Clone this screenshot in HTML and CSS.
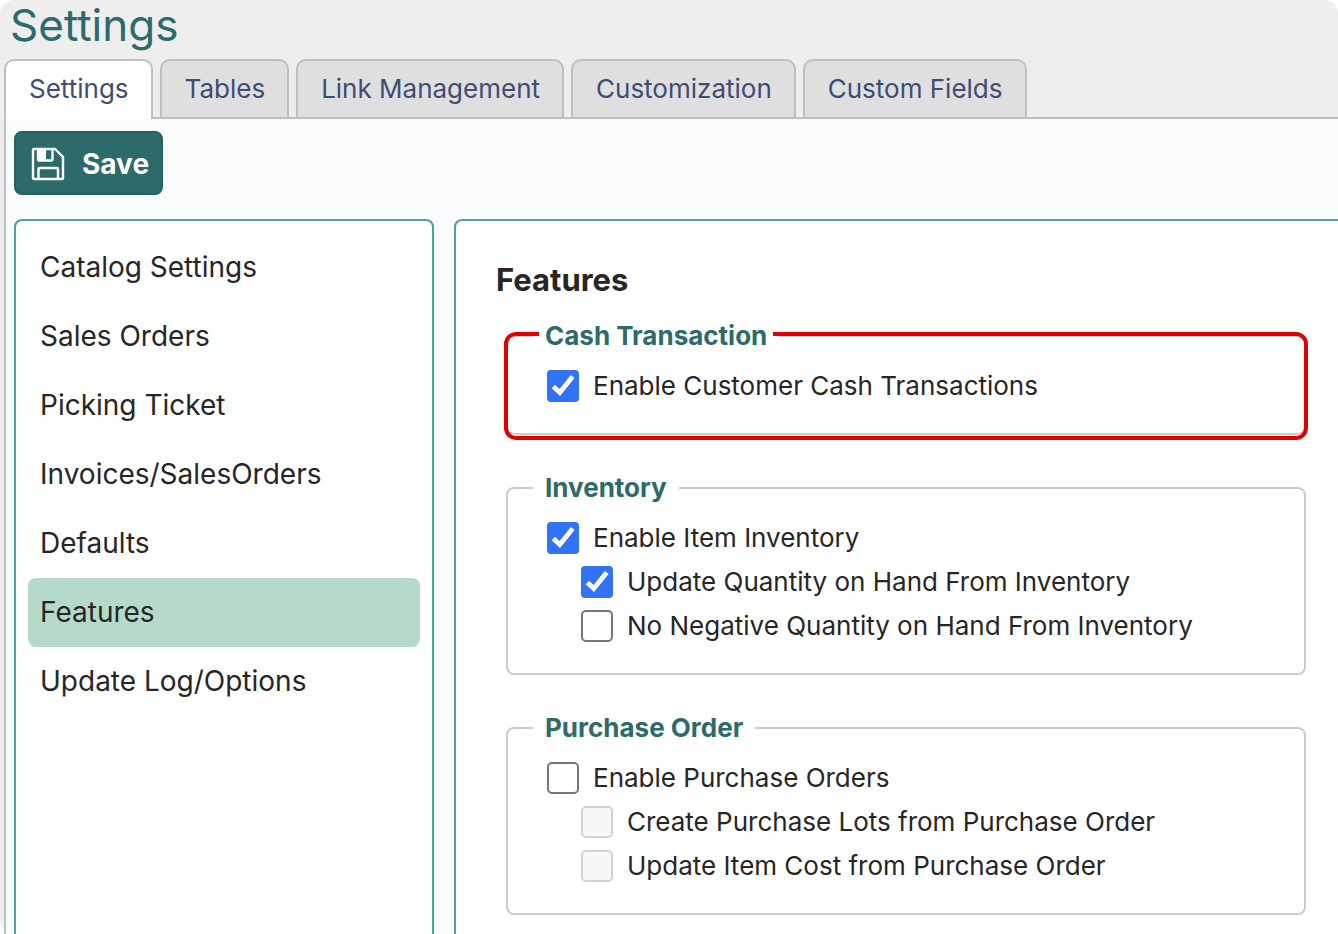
FILE: index.html
```html
<!DOCTYPE html>
<html lang="en">
<head>
<meta charset="utf-8">
<meta name="viewport" content="width=device-width, initial-scale=1">
<title>Settings</title>
<link rel="stylesheet" href="styles.css">
</head>
<body>
<div class="page">
  <h1 class="title">Settings</h1>
  <nav class="tabs">
    <a class="tab active" href="#settings">Settings</a>
    <a class="tab" href="#tables">Tables</a>
    <a class="tab" href="#links">Link Management</a>
    <a class="tab" href="#customization">Customization</a>
    <a class="tab" href="#fields">Custom Fields</a>
  </nav>
  <main class="content">
    <button class="save" type="button">
      <svg class="save-icon" viewBox="0 0 34 34" fill="none" stroke="#fff" stroke-width="2.400" stroke-linejoin="round" aria-hidden="true">
        <path d="M3 2H24L32 10V31a1 1 0 0 1-1 1H3a1 1 0 0 1-1-1V3a1 1 0 0 1 1-1Z"/>
        <path d="M7 2V12.500a1 1 0 0 0 1 1H20.500a1 1 0 0 0 1-1V2"/>
        <path d="M7 2H15V13.500H7Z" fill="#fff" stroke="none"/>
        <path d="M7.500 32V22a1 1 0 0 1 1-1H26a1 1 0 0 1 1 1V32"/>
      </svg>
      Save
    </button>
    <div class="columns">
      <nav class="side">
        <a class="side-link" href="#catalog">Catalog Settings</a>
        <a class="side-link" href="#sales">Sales Orders</a>
        <a class="side-link" href="#picking">Picking Ticket</a>
        <a class="side-link" href="#invoices">Invoices/SalesOrders</a>
        <a class="side-link" href="#defaults">Defaults</a>
        <a class="side-link current" href="#features">Features</a>
        <a class="side-link" href="#log">Update Log/Options</a>
      </nav>
      <section class="panel">
        <h2 class="heading">Features</h2>
        <fieldset class="group highlighted">
          <legend class="legend"><span class="legend-text">Cash Transaction</span></legend>
          <label class="option"><input class="check" type="checkbox" checked>Enable Customer Cash Transactions</label>
        </fieldset>
        <fieldset class="group">
          <legend class="legend">Inventory</legend>
          <label class="option"><input class="check" type="checkbox" checked>Enable Item Inventory</label>
          <label class="option sub"><input class="check" type="checkbox" checked>Update Quantity on Hand From Inventory</label>
          <label class="option sub"><input class="check" type="checkbox">No Negative Quantity on Hand From Inventory</label>
        </fieldset>
        <fieldset class="group">
          <legend class="legend">Purchase Order</legend>
          <label class="option"><input class="check" type="checkbox">Enable Purchase Orders</label>
          <label class="option sub"><input class="check" type="checkbox" disabled>Create Purchase Lots from Purchase Order</label>
          <label class="option sub"><input class="check" type="checkbox" disabled>Update Item Cost from Purchase Order</label>
        </fieldset>
      </section>
    </div>
  </main>
</div>
</body>
</html>
```

FILE: styles.css
```css
* {
  box-sizing: border-box;
}

html {
  background: #fff;
}

body {
  margin: 0;
  font-family: Inter, "Liberation Sans", sans-serif;
  font-size: 26px;
  color: #262626;
}

.page {
  display: flex;
  flex-direction: column;
  min-height: 100vh;
  padding-left: 4px;
  background: #eee;
  border-radius: 14px;
}

.title {
  margin: 0;
  padding: 0 6px 9px;
  font-size: 44px;
  line-height: 50px;
  font-weight: 400;
  color: #2d6a6a;
}

.tabs {
  display: flex;
  gap: 7px;
}

.tab {
  padding: 0 22px 0 23px;
  border: 2px solid #bfbfbf;
  border-bottom: 0;
  border-radius: 10px 10px 0 0;
  background: #dfdfdf;
  line-height: 56px;
  color: #3d4d74;
  text-decoration: none;
  white-space: nowrap;
}

.tab.active {
  z-index: 1;
  margin-bottom: -2px;
  background: #fff;
}

.content {
  flex: 1;
  display: flex;
  flex-direction: column;
  align-items: flex-start;
  gap: 24px;
  padding: 12px 0 0 8px;
  border-top: 2px solid #bfbfbf;
  border-left: 2px solid #bfbfbf;
  background: #fafbfd;
}

.save {
  display: flex;
  align-items: center;
  gap: 17px;
  height: 64px;
  padding: 2px 12px 0 15px;
  border: 2px solid #285f5f;
  border-radius: 8px;
  background: #2d6a6a;
  color: #fff;
  font: 700 28px Inter, "Liberation Sans", sans-serif;
}

.save-icon {
  width: 34px;
  height: 34px;
}

.columns {
  flex: 1;
  align-self: stretch;
  display: flex;
  gap: 20px;
}

.side,
.panel {
  border: 2px solid #4aa3a3;
  border-bottom: 0;
  background: #fff;
}

.side {
  flex: 0 0 420px;
  padding: 12px;
  border-radius: 8px 8px 0 0;
}

.side-link {
  display: block;
  padding: 0 12px;
  border-radius: 8px;
  font-size: 28px;
  line-height: 69px;
  color: #262626;
  text-decoration: none;
}

.side-link.current {
  background: #b5dac9;
}

.panel {
  flex: 1;
  min-width: 0;
  padding: 39px 32px 19px 40px;
  border-right: 0;
  border-radius: 8px 0 0 0;
}

.heading {
  margin: 0 0 20px;
  font-size: 31px;
  line-height: 40px;
  font-weight: 700;
}

.group {
  position: relative;
  min-width: 0;
  margin: 0 0 37px 10px;
  padding: 12px 25px 25px;
  border: 2px solid #ccc;
  border-radius: 8px;
}

.group:last-child {
  margin-bottom: 0;
}

.legend {
  padding: 0 12px;
  line-height: 32px;
  font-weight: 700;
  color: #2d6a6a;
}

.highlighted::after {
  content: "";
  position: absolute;
  inset: -20px -4px -7px;
  border: 4px solid #e00000;
  border-radius: 12px;
  pointer-events: none;
}

.legend-text {
  position: relative;
  z-index: 1;
  margin: 0 -6px;
  padding: 0 6px;
  background: #fff;
}

.option {
  display: flex;
  align-items: center;
  gap: 14px;
  padding-left: 14px;
  line-height: 44px;
}

.option.sub {
  padding-left: 48px;
}

.check {
  flex: none;
  appearance: none;
  width: 32px;
  height: 32px;
  margin: 0;
  border: 2px solid #767676;
  border-radius: 5px;
  background: #fff;
}

.check:checked {
  border-color: #3273f6;
  border-radius: 4px;
  background: #3273f6 url("data:image/svg+xml,%3Csvg xmlns='http://www.w3.org/2000/svg' viewBox='0 0 32 32'%3E%3Cpath d='M6.300 16.500L12.800 22.500L25.700 6.500' fill='none' stroke='%23fff' stroke-width='4.800'/%3E%3C/svg%3E") center / 32px 32px no-repeat;
}

.check:disabled {
  border-color: #d1d1d1;
  background: #f8f8f8;
}
```
